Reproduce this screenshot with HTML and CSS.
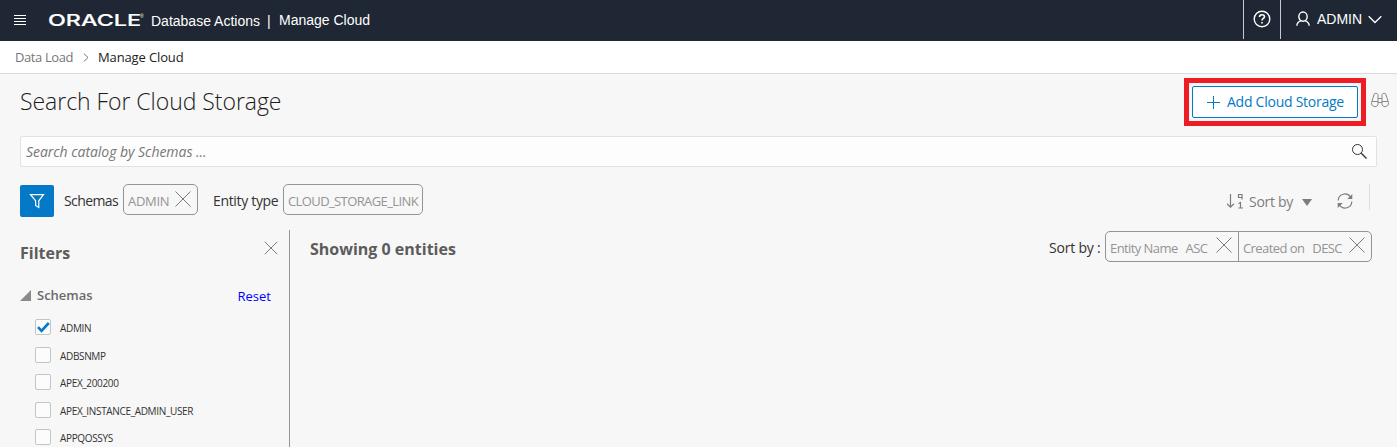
FILE: index.html
```html
<!DOCTYPE html>
<html lang="en">
<head>
<meta charset="utf-8">
<title>Manage Cloud</title>
<link rel="stylesheet" href="styles.css">
</head>
<body>
<header class="topbar">
  <svg class="menu" width="13" height="12" viewBox="0 0 13 12"><path d="M0 1.500h12M0 4.500h12M0 7.500h12M0 10.500h12" stroke="#fff"/></svg>
  <svg class="logo" width="102" height="20" viewBox="0 0 102 20"><text class="logo-word" x="-1" y="16" textLength="93" lengthAdjust="spacingAndGlyphs">ORACLE</text><text class="logo-mark" x="91" y="8">®</text></svg>
  <span class="product">Database Actions</span>
  <span class="bar">|</span>
  <span class="page">Manage Cloud</span>
  <div class="help"><svg width="18" height="18" viewBox="0 0 18 18" fill="none" stroke="#fff" stroke-width="1.400"><circle cx="9" cy="9" r="7.800"/><path d="M6.500 7C6.500 5.500 7.500 4.700 9 4.700s2.500.8 2.500 2.100c0 1.600-2.500 1.800-2.500 3.700M9 12v1.600" stroke-width="1.600"/></svg></div>
  <div class="user">
    <svg width="14" height="16" viewBox="0 0 14 16" fill="none" stroke="#fff" stroke-width="1.400"><ellipse cx="7" cy="5.600" rx="4.200" ry="4.600"/><path d="M.8 14.800c.2-2.600 1.600-4.300 4.200-5.200M13.200 14.800c-.2-2.600-1.600-4.300-4.200-5.200"/></svg>
    <span class="user-name">ADMIN</span>
    <svg width="14" height="9" viewBox="0 0 14 9" fill="none" stroke="#fff" stroke-width="1.300"><path d="M.7 1.200 7 7.500l6.300-6.300"/></svg>
  </div>
</header>
<nav class="crumbs">
  <span class="crumb">Data Load</span>
  <svg width="6" height="9" viewBox="0 0 6 9" fill="none" stroke="#777"><path d="M.8.5 5 4.500.8 8.500"/></svg>
  <span class="crumb-now">Manage Cloud</span>
</nav>
<main class="content">
  <div class="title-row">
    <h1 class="title">Search For Cloud Storage</h1>
    <div class="callout"><button class="add"><svg width="13" height="13" viewBox="0 0 13 13"><path d="M6.500 0v13M0 6.500h13" stroke="#0379c7"/></svg><span>Add Cloud Storage</span></button></div>
    <svg class="binoculars" width="18" height="16" viewBox="0 0 18 16" fill="none" stroke="#8a8a8a"><path d="M1 9 3.200 2C3.600 1 6.500 1 7 2.500V12c0 3.500-6 3.500-6.400 0C.5 11 .6 10 1 9zM17 9l-2.200-7c-.4-1-3.300-1-3.800.5V12c0 3.500 6 3.500 6.400 0 .1-1 0-2-.4-3zM7 6.500h4M7 10.500h4M1 9.500h6M11 9.500h6"/></svg>
  </div>
  <div class="search"><span class="hint">Search catalog by Schemas ...</span><svg width="17" height="17" viewBox="0 0 17 17" fill="none" stroke="#333"><circle cx="6.500" cy="6.500" r="5"/><path d="m10.300 10.300 5.200 5.200" stroke-width="1.300"/></svg></div>
  <div class="tools">
    <div class="filter"><svg width="16" height="16" viewBox="0 0 16 16" fill="none" stroke="#fff" stroke-width="1.200"><path d="M1.500 1.600h13L9.800 7.800v6.700l-3.200-2V7.800z"/></svg></div>
    <span class="label label-schemas">Schemas</span>
    <div class="chip chip-admin"><span>ADMIN</span><svg width="16" height="16" viewBox="0 0 16 16"><path class="x" d="m.5.5 15 15m0-15-15 15"/></svg></div>
    <span class="label label-entity">Entity type</span>
    <div class="chip chip-entity"><span>CLOUD_STORAGE_LINK</span></div>
    <div class="sort">
      <svg width="16" height="16" viewBox="0 0 16 16" fill="none" stroke="#7d7d7d" stroke-width="1.200"><path d="M3.500 1v13M0 10.800l3.500 3.400L7 10.800M15 6.500v-5h-3.500v3H15M11.500 10.500l2-1V15M11.500 15H16"/></svg>
      <span class="sort-name">Sort by</span>
      <i class="caret"></i>
      <svg class="refresh" width="16" height="16" viewBox="0 0 16 16" fill="none" stroke="#7d7d7d" stroke-width="1.200"><path d="M1.200 7.500A6.700 6.700 0 0 1 13.500 4M14.800 8.500A6.700 6.700 0 0 1 2.500 12"/><path d="M15.300 1v5h-5zM.7 15v-5h5z" fill="#7d7d7d" stroke="none"/></svg>
      <i class="rule"></i>
    </div>
  </div>
  <div class="columns">
    <aside class="filters">
      <div class="filters-head"><h2 class="sub">Filters</h2><svg width="14" height="14" viewBox="0 0 14 14"><path class="x" d="m.8.8 12.400 12.400m0-12.400L.8 13.200"/></svg></div>
      <div class="group"><i class="open"></i><span class="group-name">Schemas</span><a class="reset">Reset</a></div>
      <ul class="list">
        <li class="item"><i class="box"><svg width="13" height="11" viewBox="0 0 13 11" fill="none" stroke="#0379c7" stroke-width="2.600"><path d="m1 5.200 3.500 3.700L11.800 1"/></svg></i><span>ADMIN</span></li>
        <li class="item"><i class="box"></i><span>ADBSNMP</span></li>
        <li class="item"><i class="box"></i><span>APEX_200200</span></li>
        <li class="item"><i class="box"></i><span>APEX_INSTANCE_ADMIN_USER</span></li>
        <li class="item"><i class="box"></i><span>APPQOSSYS</span></li>
      </ul>
    </aside>
    <section class="results">
      <h2 class="sub count">Showing 0 entities</h2>
      <div class="sorted"><span class="label">Sort by :</span>
        <div class="chip sort-a"><span>Entity Name</span><span class="dir">ASC</span><svg width="16" height="16" viewBox="0 0 16 16"><path class="x" d="m.5.5 15 15m0-15-15 15"/></svg></div><div class="chip sort-b"><span>Created on</span><span class="dir">DESC</span><svg width="16" height="16" viewBox="0 0 16 16"><path class="x" d="m.5.5 15 15m0-15-15 15"/></svg></div>
      </div>
    </section>
  </div>
</main>
</body>
</html>
```
FILE: styles.css
```css
* { box-sizing: border-box; }
body { margin: 0; height: 447px; overflow: hidden; background: #f7f7f7; color: #333; font: 14px "Open Sans", "Noto Sans", sans-serif; display: flex; flex-direction: column; }
svg { flex: none; display: block; }
span, a { white-space: nowrap; }
h1, h2, ul { margin: 0; padding: 0; }

/* Top bar */
.topbar { height: 41px; flex: none; background: #1e2733; color: #fff; display: flex; align-items: flex-start; padding-left: 14px; font: 14px/20px "Liberation Sans", sans-serif; }
.menu { margin: 14px 22px 0 0; }
.logo { margin-top: 10px; overflow: visible; }
.logo-word { font: 500 16.500px Inter, sans-serif; fill: #fff; stroke: #fff; stroke-width: .2px; }
.logo-mark { font: 5px "Liberation Sans", sans-serif; fill: #fff; }
.product { margin-top: 11px; width: 108px; }
.bar { margin: 11px 0 0 8px; width: 4px; }
.page { margin: 10px 0 0 8px; }
.help { margin-left: auto; width: 38px; height: 39px; border-left: 1px solid #c8cbce; border-right: 1px solid #c8cbce; display: flex; align-items: flex-start; justify-content: center; padding-top: 10px; }
.user { width: 116px; height: 38px; display: flex; align-items: center; padding-left: 15px; }
.user-name { width: 44px; margin: 0 7px; }

/* Breadcrumbs */
.crumbs { height: 33px; flex: none; background: #fff; border-bottom: 1px solid #d6dde2; display: flex; align-items: center; padding-left: 15px; font-size: 13px; }
.crumb { width: 58px; color: #777; margin-right: 10px; letter-spacing: -.4px; }
.crumb-now { margin-left: 9px; color: #222; letter-spacing: -.13px; }

/* Title and search */
.content { padding: 0 20px; flex: 1; display: flex; flex-direction: column; min-height: 0; }
.title-row { display: flex; height: 62px; padding-top: 4px; margin-right: -12px; }
.title { font-size: 23px; line-height: 47px; font-weight: 300; color: #1c1c1c; flex: 1; letter-spacing: -.04px; }
.callout { width: 182px; height: 48px; border: 5px solid #ee1c24; padding: 3px; }
.add { width: 166px; height: 32px; margin: 0; border: 1px solid #0379c7; border-radius: 2px; background: #fff; color: #0379c7; padding: 0 0 0 14px; display: flex; align-items: center; gap: 7px; font: 14px "Open Sans", sans-serif; letter-spacing: -.25px; }
.add span { margin-top: -1px; }
.binoculars { margin: 14px 0 0 5px; }
.search { height: 31px; flex: none; border: 1px solid #e2e2e2; border-radius: 2px; background: #fdfdfd; display: flex; align-items: center; justify-content: space-between; padding: 0 8px 0 5px; }
.hint { font-style: italic; color: #777; font-size: 14px; letter-spacing: -.04px; }

/* Active filters */
.tools { display: flex; height: 63px; flex: none; padding-top: 17px; align-items: flex-start; }
.filter { width: 34px; height: 32px; margin: 1px 10px 0 0; background: #0379c7; border-radius: 2px; display: flex; align-items: center; justify-content: center; }
.label { font-size: 14px; line-height: 34px; letter-spacing: -.33px; }
.label-schemas { width: 59px; letter-spacing: -.6px; }
.chip { height: 31px; border: 1px solid #949494; border-radius: 5px; color: #949494; font-size: 13px; line-height: 33px; display: flex; padding: 0 4px; letter-spacing: -.58px; }
.chip svg { margin-top: 6px; }
.x { stroke: #7d7d7d; fill: none; }
.chip-admin { width: 75px; justify-content: space-between; letter-spacing: -.3px; }
.chip-admin svg { margin-right: 2px; }
.label-entity { width: 70px; margin-left: 15px; }
.chip-entity { width: 140px; letter-spacing: -.6px; }
.sort { margin-left: auto; padding-right: 7px; display: flex; align-items: center; height: 34px; color: #7d7d7d; }
.sort-name { width: 44px; margin-left: 6px; letter-spacing: -.3px; }
.caret { border: 5px solid transparent; border-top: 7px solid #7d7d7d; border-bottom: 0; margin: 2px 25px 0 9px; }
.refresh { margin-right: 16px; }
.rule { width: 1px; height: 26px; background: #ddd; margin-top: -8px; }

/* Filter panel */
.columns { display: flex; flex: 1; min-height: 0; }
.filters { width: 270px; border-right: 1px solid #949494; overflow: hidden; }
.filters-head { display: flex; justify-content: space-between; padding: 11px 11px 0 0; height: 53px; }
.sub { font-size: 16px; line-height: 25px; font-weight: 700; color: #5c5c5c; }
.group { display: flex; height: 28px; line-height: 24px; }
.open { border-left: 11px solid transparent; border-bottom: 11px solid #8a8a8e; height: 0; margin: 7px 6px 0 0; }
.group-name { font-weight: 600; font-size: 13px; color: #6a6a6a; }
.reset { margin: 1px 18px 0 auto; color: #00f; font-size: 13px; }
.list { list-style: none; padding: 8px 0 0 15px; }
.item { height: 27.600px; display: flex; align-items: flex-start; font-size: 10px; line-height: 18px; letter-spacing: -.34px; }
.box { width: 16px; height: 16px; margin-right: 9px; border: 1px solid #c4c4c4; border-radius: 2px; background: #fcfcfc; display: flex; align-items: center; justify-content: center; }

/* Results */
.results { flex: 1; display: flex; justify-content: space-between; padding-left: 20px; align-items: flex-start; }
.count { margin-top: 7px; }
.sorted { display: flex; margin: 1px 5px 0 0; }
.sorted .label { width: 56px; letter-spacing: -.2px; }
.sort-a { width: 134px; border-radius: 5px 0 0 5px; }
.sort-b { width: 134px; border-radius: 0 5px 5px 0; margin-left: -1px; }
.sorted .chip svg { margin: 5px 2px 0 auto; }
.dir { margin-left: 8px; }
```
